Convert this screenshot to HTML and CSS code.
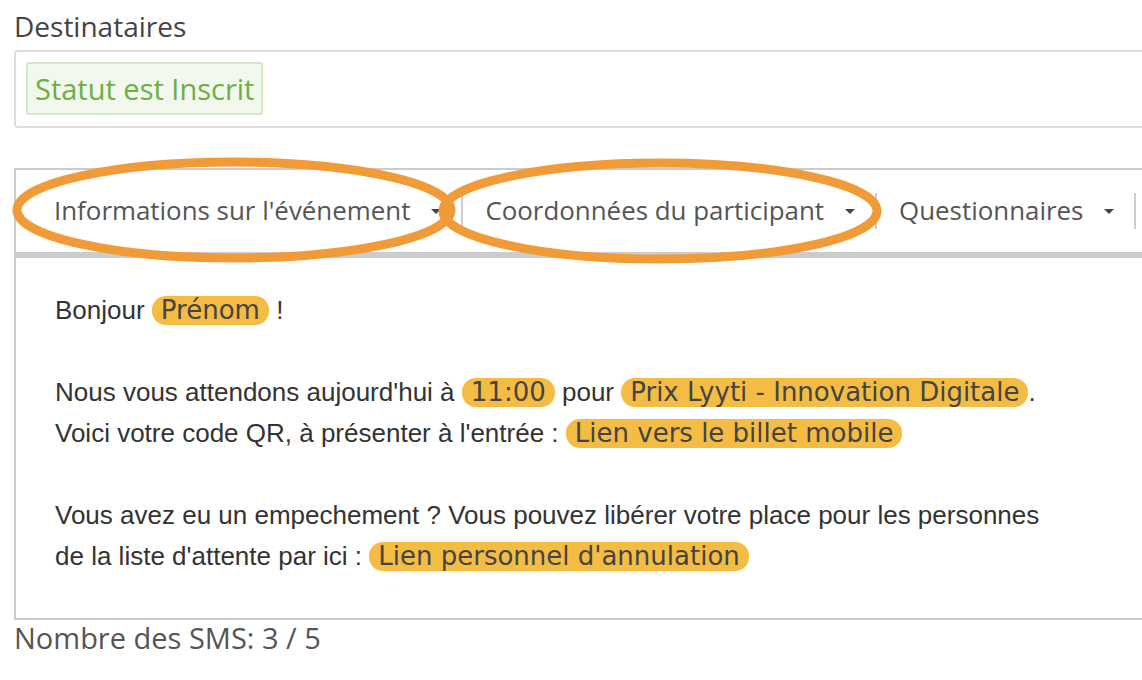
FILE: index.html
```html
<!DOCTYPE html>
<html lang="fr">
<head>
    <meta charset="UTF-8">
    <meta name="viewport" content="width=device-width, initial-scale=1.0">
    <title>SMS - Destinataires</title>
    <link rel="stylesheet" href="styles.css">
</head>
<body>
    <div class="page">
        <label class="field-label">Destinataires</label>
        <div class="recipients">
            <span class="filter-tag">Statut est Inscrit</span>
        </div>

        <div class="editor">
            <div class="toolbar">
                <div class="menu first">
                    <span>Informations sur l'événement</span>
                    <span class="caret"></span>
                </div>
                <div class="divider"></div>
                <div class="menu">
                    <span>Coordonnées du participant</span>
                    <span class="caret"></span>
                </div>
                <div class="divider"></div>
                <div class="menu">
                    <span>Questionnaires</span>
                    <span class="caret"></span>
                </div>
                <div class="divider"></div>
            </div>
            <div class="content">
                <p>Bonjour <span class="token">Prénom</span> !</p>
                <p><br></p>
                <p>Nous vous attendons aujourd'hui à <span class="token">11:00</span> pour <span class="token">Prix Lyyti - Innovation Digitale</span>.</p>
                <p>Voici votre code QR, à présenter à l'entrée : <span class="token">Lien vers le billet mobile</span></p>
                <p><br></p>
                <p>Vous avez eu un empechement ? Vous pouvez libérer votre place pour les personnes<br>de la liste d'attente par ici : <span class="token">Lien personnel d'annulation</span></p>
            </div>
        </div>
        <div class="sms-count">Nombre des SMS: 3 / 5</div>

        <!-- highlight marks drawn over the toolbar -->
        <svg class="marks" width="1142" height="680" viewBox="0 0 1142 680">
            <ellipse cx="234" cy="210" rx="217" ry="48" />
            <ellipse cx="660" cy="211" rx="217" ry="48" />
        </svg>
    </div>
</body>
</html>
```

FILE: styles.css
```css
html, body {
    margin: 0;
    padding: 0;
    overflow: hidden;
    background-color: #ffffff;
}
.page {
    position: relative;
    padding: 6px 0 0 14px;
    font-family: 'Open Sans', 'DejaVu Sans', sans-serif;
    color: #444;
}
.field-label {
    display: block;
    font-size: 28px;
    line-height: 40px;
    margin-bottom: 4px;
    color: #444;
}
.recipients {
    border: 2px solid #dddddd;
    border-radius: 4px;
    padding: 10px;
    margin-right: -40px;
    height: 54px;
}
.filter-tag {
    display: inline-block;
    font-size: 29px;
    line-height: 49px;
    padding: 0 7px;
    color: #6cb042;
    background-color: #f2f8ee;
    border: 2px solid #d2e7c4;
    border-radius: 3px;
}
.editor {
    margin-top: 40px;
    margin-right: -40px;
    border: 2px solid #cccccc;
}
.toolbar {
    display: flex;
    align-items: center;
    height: 82px;
    padding-left: 16px;
    border-bottom: 6px solid #cccccc;
}
.menu {
    display: flex;
    align-items: center;
    gap: 21px;
    padding: 0 20px 0 22px;
    font-size: 25.9px;
    line-height: 34px;
    padding-bottom: 3px;
    color: #555;
    white-space: nowrap;
}
.caret {
    width: 0;
    height: 0;
    margin-top: 3px;
    border-left: 5px solid transparent;
    border-right: 5px solid transparent;
    border-top: 5px solid #444;
}
.divider {
    width: 2px;
    height: 36px;
    background-color: #cccccc;
}
.content {
    padding: 32px 20px 41px 39px;
    font-family: 'Liberation Sans', Arial, sans-serif;
    font-size: 26px;
    line-height: 41px;
    color: #333;
}
.content p {
    margin: 0;
}
.token {
    display: inline-block;
    font-family: 'DejaVu Sans', Verdana, sans-serif;
    font-size: 26px;
    line-height: 29px;
    padding: 0 9px;
    color: #444;
    background-color: #f4bc42;
    border-radius: 14px;
}
.sms-count {
    font-size: 29px;
    line-height: 36px;
    color: #555;
}
.marks {
    position: absolute;
    top: 0;
    left: 0;
    pointer-events: none;
}
.marks ellipse {
    fill: none;
    stroke: #f19a38;
    stroke-width: 9;
}
```
